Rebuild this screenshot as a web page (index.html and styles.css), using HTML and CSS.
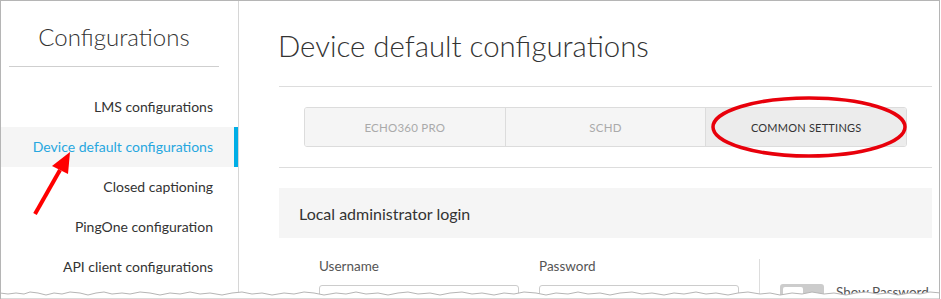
FILE: index.html
```html
<!DOCTYPE html>
<html lang="en">
<head>
<meta charset="UTF-8">
<title>Device default configurations</title>
<link rel="stylesheet" href="styles.css">
</head>
<body>
<div class="frame">

  <aside class="sidebar">
    <h2 class="side-title">Configurations</h2>
    <nav class="side-nav">
      <a class="side-link">LMS configurations</a>
      <a class="side-link active">Device default configurations</a>
      <a class="side-link">Closed captioning</a>
      <a class="side-link">PingOne configuration</a>
      <a class="side-link">API client configurations</a>
    </nav>
  </aside>

  <main class="content">
    <h1 class="page-title">Device default configurations</h1>

    <div class="tabs-row">
      <div class="tabs">
        <span class="tab">ECHO360 PRO</span>
        <span class="tab">SCHD</span>
        <span class="tab active">COMMON SETTINGS</span>
      </div>
    </div>

    <div class="section-head">Local administrator login</div>

    <div class="form-row">
      <div class="field">
        <label>Username</label>
        <div class="input"></div>
      </div>
      <div class="field">
        <label>Password</label>
        <div class="input"></div>
      </div>
      <div class="toggle-col">
        <span class="toggle"><span class="knob"></span></span>
        <span class="toggle-label">Show Password</span>
      </div>
    </div>
  </main>

  <!-- annotations drawn over the screenshot -->
  <svg class="marks" width="941" height="299" viewBox="0 0 941 299">
    <ellipse cx="809" cy="127" rx="96" ry="29" fill="none" stroke="#e8000b" stroke-width="3.5"/>
    <line x1="35" y1="214" x2="60" y2="170" stroke="#f00" stroke-width="4"/>
    <polygon points="70,152 52,166 68,174" fill="#f00"/>
  </svg>

  <!-- torn bottom edge -->
  <svg class="torn" width="941" height="10" viewBox="0 0 941 10">
    <path d="M0 4 L8 5 L16 4 L24 5 L30 3 L38 4 L46 6 L54 4 L62 5 L70 3 L80 4 L88 6 L96 4 L104 3 L112 5 L122 4 L130 5 L140 3 L150 4 L160 6 L170 4 L180 5 L190 3 L200 5 L210 4 L222 6 L232 4 L242 3 L252 5 L262 4 L272 6 L284 4 L294 5 L304 3 L314 4 L324 6 L336 4 L346 5 L356 3 L366 5 L378 4 L388 6 L398 4 L408 3 L418 5 L430 4 L440 6 L450 4 L462 3 L472 5 L482 4 L494 6 L504 4 L514 5 L524 3 L536 4 L546 6 L556 4 L568 5 L578 3 L588 5 L600 4 L610 6 L620 4 L632 3 L642 5 L652 4 L664 6 L674 4 L684 5 L696 3 L706 5 L716 4 L728 6 L738 4 L748 3 L760 5 L770 4 L780 6 L792 4 L802 5 L812 3 L824 5 L834 4 L846 6 L856 4 L866 3 L878 5 L888 4 L898 6 L910 4 L920 5 L930 3 L941 4 L941 10 L0 10 Z" fill="#fff" stroke="#b5b5b5" stroke-width="1"/>
  </svg>

</div>
</body>
</html>
```

FILE: styles.css
```css
* { box-sizing: border-box; margin: 0; padding: 0; }

body {
  font-family: 'Lato', 'Open Sans', sans-serif;
  color: #333;
  background: #fff;
}

.frame {
  position: relative;
  width: 940px;
  height: 299px;
  border: 1px solid #b5b5b5;
  border-bottom: none;
  display: flex;
  overflow: hidden;
}

/* ── SIDEBAR ── */
.sidebar {
  width: 238px;
  flex-shrink: 0;
  border-right: 1px solid #d6d6d6;
}

.side-title {
  margin: 0 19px 0 8px;
  height: 66px;
  padding-top: 21px;
  border-bottom: 1px solid #cfcfcf;
  font-size: 24px;
  font-weight: 300;
  text-align: center;
  color: #333;
}

.side-nav {
  display: flex;
  flex-direction: column;
  margin-top: 20px;
}

.side-link {
  height: 40px;
  line-height: 40px;
  padding-right: 21px;
  text-align: right;
  font-size: 14px;
  color: #333;
  border-right: 4px solid transparent;
}

.side-link.active {
  background: #f5f5f5;
  color: #27a7df;
  border-right-color: #00aee6;
}

/* ── CONTENT ── */
.content {
  flex: 1;
  padding: 0 7px 0 40px;
}

.page-title {
  height: 86px;
  padding-top: 27px;
  border-bottom: 1px solid #ddd;
  font-size: 29.4px;
  font-weight: 300;
  color: #333;
  text-indent: -1px;
}

.tabs-row {
  padding: 20px 25px;
  border-bottom: 1px solid #ddd;
}

.tabs {
  display: flex;
  height: 40px;
  border: 1px solid #dcdcdc;
  border-radius: 3px;
  overflow: hidden;
}

.tab {
  flex: 1;
  display: flex;
  align-items: center;
  justify-content: center;
  background: #f5f5f5;
  font-size: 11.5px;
  letter-spacing: 0.02em;
  color: #aaa;
}

.tab + .tab { border-left: 1px solid #dcdcdc; }

.tab.active {
  background: #ececec;
  color: #333;
  font-size: 11px;
}

.section-head {
  margin-top: 20px;
  height: 50px;
  padding-left: 20px;
  display: flex;
  align-items: center;
  background: #f5f5f5;
  font-size: 16px;
  color: #333;
}

.form-row {
  display: flex;
  padding-left: 40px;
  margin-top: 21px;
}

.field {
  width: 200px;
  margin-right: 20px;
  display: flex;
  flex-direction: column;
}

.field label {
  font-size: 13.5px;
  color: #555;
  line-height: 15px;
  margin-bottom: 11px;
}

.input {
  height: 30px;
  border: 1px solid #ccc;
  border-radius: 3px;
}

.toggle-col {
  border-left: 1px solid #ddd;
  padding-left: 20px;
  display: flex;
  align-items: flex-start;
  gap: 12px;
  padding-top: 25px;
  height: 60px;
}

.toggle {
  width: 44px;
  height: 20px;
  background: #ccc;
  border-radius: 3px;
  padding: 3px;
}

.knob {
  display: block;
  width: 20px;
  height: 14px;
  background: #fff;
  border-radius: 2px;
}

.toggle-label {
  font-size: 13.5px;
  color: #555;
  line-height: 16px;
}

/* ── OVERLAYS ── */
.marks {
  position: absolute;
  left: -1px;
  top: -1px;
  pointer-events: none;
}

.torn {
  position: absolute;
  left: -1px;
  bottom: 0;
}
```
